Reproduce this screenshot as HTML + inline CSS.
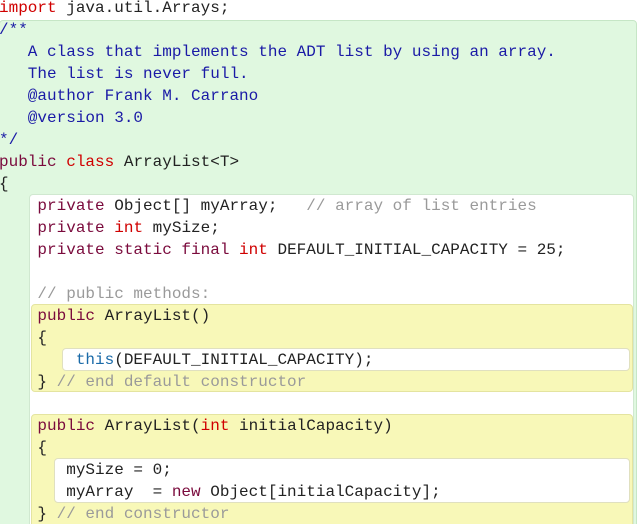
<!DOCTYPE html>
<html><head><meta charset="utf-8"><style>
html,body{margin:0;padding:0;background:#fff;width:638px;height:524px;overflow:hidden;position:relative}
.b{position:absolute;box-sizing:border-box;border:1px solid #c6e6c6;border-radius:4px}
pre{position:absolute;left:-1px;top:-3px;margin:0;font-family:"Liberation Mono","DejaVu Sans Mono",monospace;font-size:16px;line-height:22px;color:#222}
.r{color:#d00000}.m{color:#7a0a3c}.d{color:#1a1aa6}.c{color:#9a9a9a}.t{color:#1a6aa8}
</style></head><body>
<div class="b" style="left:-1px;top:20px;width:638px;height:520px;background:#e0f8e0"></div>
<div class="b" style="left:29px;top:194px;width:605px;height:340px;background:#fff;border-color:#d0e8d0"></div>
<div class="b" style="left:31px;top:304px;width:602px;height:88px;background:#f8f8b8;border-color:#e4e4a0"></div>
<div class="b" style="left:62px;top:348px;width:568px;height:23px;background:#fff;border-color:#e0e0c0"></div>
<div class="b" style="left:31px;top:414px;width:602px;height:120px;background:#f8f8b8;border-color:#e4e4a0"></div>
<div class="b" style="left:54px;top:458px;width:576px;height:45px;background:#fff;border-color:#e0e0c0"></div>
<pre><span class="r">import</span> java.util.Arrays;
<span class="d">/**
   A class that implements the ADT list by using an array.
   The list is never full.
   @author Frank M. Carrano
   @version 3.0
*/</span>
<span class="m">public</span> <span class="r">class</span> ArrayList&lt;T&gt;
{
    <span class="m">private</span> Object[] myArray;   <span class="c">// array of list entries</span>
    <span class="m">private</span> <span class="r">int</span> mySize;
    <span class="m">private static final</span> <span class="r">int</span> DEFAULT_INITIAL_CAPACITY = 25;

    <span class="c">// public methods:</span>
    <span class="m">public</span> ArrayList()
    {
        <span class="t">this</span>(DEFAULT_INITIAL_CAPACITY);
    } <span class="c">// end default constructor</span>

    <span class="m">public</span> ArrayList(<span class="r">int</span> initialCapacity)
    {
       mySize = 0;
       myArray  = <span class="m">new</span> Object[initialCapacity];
    } <span class="c">// end constructor</span>
</pre>
</body></html>
